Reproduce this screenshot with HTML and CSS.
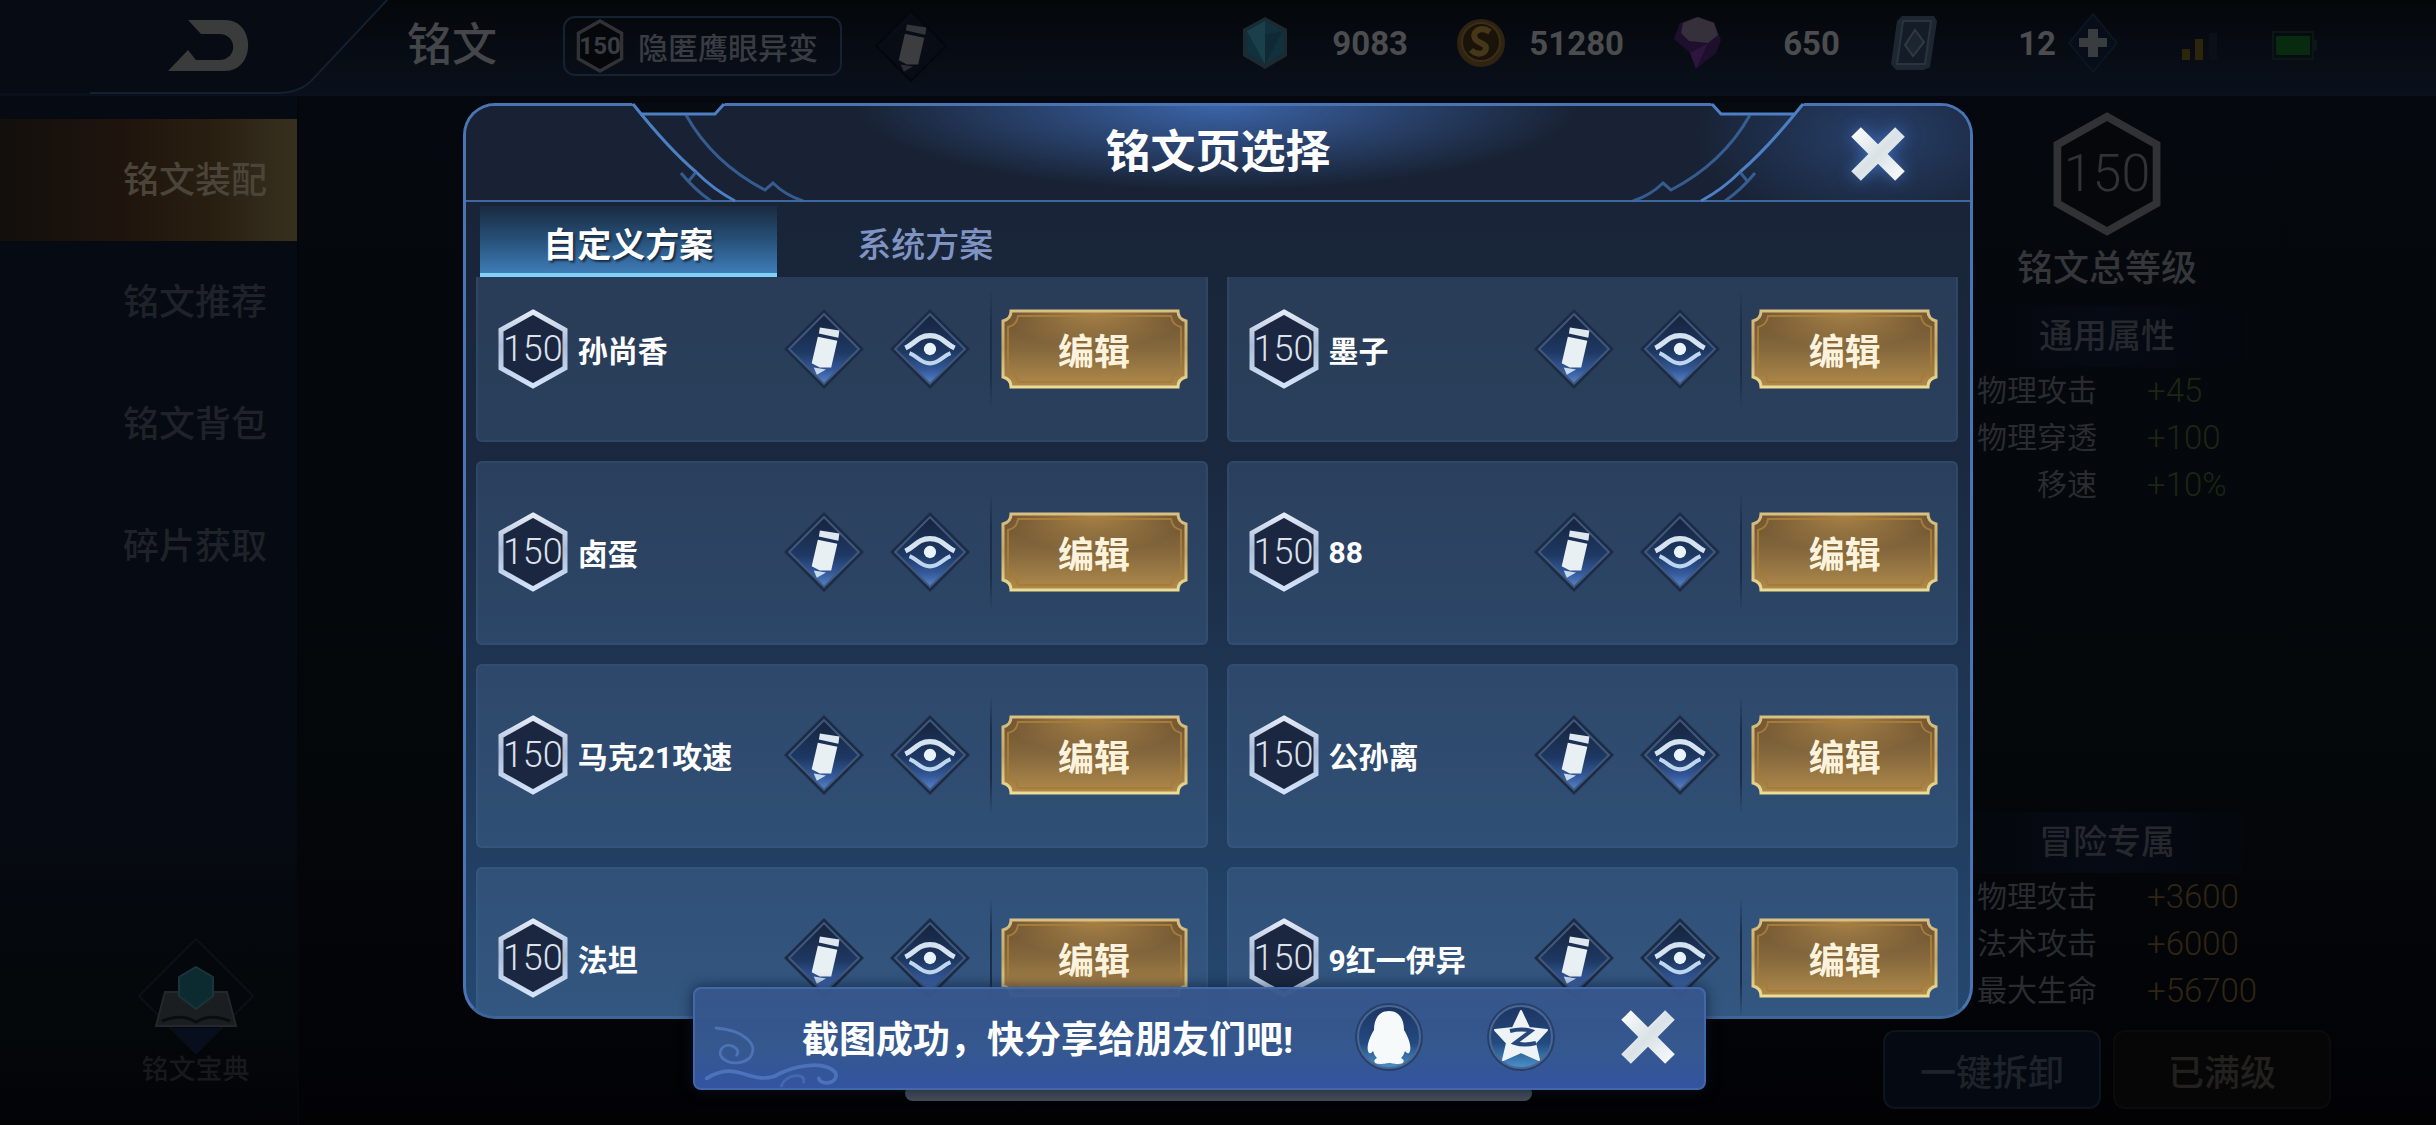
FILE: index.html
```html
<!DOCTYPE html>
<html lang="zh-CN">
<head>
    <meta charset="UTF-8">
    <title>铭文</title>
    <link rel="stylesheet" href="styles.css">
</head>
<body>
    <!-- shared icons -->
    <svg class="defs" width="0" height="0" aria-hidden="true">
        <defs>
            <linearGradient id="hexLine" x1="0" y1="0" x2="0" y2="1">
                <stop offset="0" stop-color="#e4eaf6"/>
                <stop offset="0.45" stop-color="#a9bcd8"/>
                <stop offset="1" stop-color="#d3e3fa"/>
            </linearGradient>
            <linearGradient id="diamondFill" x1="0" y1="0" x2="0" y2="1">
                <stop offset="0" stop-color="#16233c"/>
                <stop offset="0.55" stop-color="#1e3964"/>
                <stop offset="0.8" stop-color="#34599a"/>
                <stop offset="1" stop-color="#5685cc"/>
            </linearGradient>
            <linearGradient id="goldFill" x1="0" y1="0" x2="0" y2="1">
                <stop offset="0" stop-color="#6d5230"/>
                <stop offset="0.5" stop-color="#85683c"/>
                <stop offset="1" stop-color="#b08a4c"/>
            </linearGradient>
            <radialGradient id="goldGlow" cx="0.5" cy="0" r="0.5">
                <stop offset="0" stop-color="#c19752" stop-opacity="0.7"/>
                <stop offset="1" stop-color="#c19752" stop-opacity="0"/>
            </radialGradient>
            <linearGradient id="goldLine" x1="0" y1="0" x2="0" y2="1">
                <stop offset="0" stop-color="#d9c083"/>
                <stop offset="0.5" stop-color="#c5a865"/>
                <stop offset="1" stop-color="#eddc93"/>
            </linearGradient>
            <linearGradient id="roundFill" x1="0" y1="0" x2="0" y2="1">
                <stop offset="0" stop-color="#1c3563"/>
                <stop offset="0.6" stop-color="#234a80"/>
                <stop offset="1" stop-color="#4a92cc"/>
            </linearGradient>
            <linearGradient id="crossFill" x1="0" y1="0" x2="1" y2="1">
                <stop offset="0" stop-color="#ffffff"/>
                <stop offset="0.5" stop-color="#d9e2e6"/>
                <stop offset="1" stop-color="#fbfdff"/>
            </linearGradient>
        </defs>
        <symbol id="hex" viewBox="0 0 70 80">
            <path d="M35 3 67 21V59L35 77 3 59V21Z" fill="#1b2740" stroke="url(#hexLine)" stroke-width="5"/>
        </symbol>
        <symbol id="hexDim" viewBox="0 0 70 80">
            <path d="M35 3 67 21V59L35 77 3 59V21Z" fill="#05070b" stroke="#303236" stroke-width="5"/>
        </symbol>
        <symbol id="pencil" viewBox="0 0 78 78">
            <path d="M39 0 78 39 39 78 0 39Z" fill="#1c2c47"/>
            <path d="M39 5 73 39 39 73 5 39Z" fill="url(#diamondFill)" stroke="#40587c" stroke-width="2"/>
            <path d="M35 18 54 21 53 28 34 24Z" fill="#dfe8ef"/>
            <path d="M33 27 52 31 46 57 35 57 27 53Z" fill="#e9f0f3"/>
            <path d="M29 57 41 59 32 64Z" fill="#c7dbee"/>
        </symbol>
        <symbol id="pencilDim" viewBox="0 0 78 78">
            <path d="M39 5 73 39 39 73 5 39Z" fill="#070c15" stroke="#04070b" stroke-width="2"/>
            <path d="M35 18 54 21 53 28 34 24Z" fill="#323539"/>
            <path d="M33 27 52 31 46 57 35 57 27 53Z" fill="#3b3d40"/>
            <path d="M29 57 41 59 32 64Z" fill="#2a2e34"/>
        </symbol>
        <symbol id="eye" viewBox="0 0 78 78">
            <path d="M39 0 78 39 39 78 0 39Z" fill="#1c2c47"/>
            <path d="M39 5 73 39 39 73 5 39Z" fill="url(#diamondFill)" stroke="#40587c" stroke-width="2"/>
            <path d="M15 38C24 34 27 26 39 26S54 34 63 38" fill="none" stroke="#d5e3f0" stroke-width="5"/>
            <path d="M19 43C27 46 30 53 39 53S51 46 59 43" fill="none" stroke="#bfd6ef" stroke-width="4"/>
            <circle cx="39" cy="39" r="6" fill="#e9f3fb"/>
        </symbol>
        <symbol id="gold" viewBox="0 0 187 80" preserveAspectRatio="none">
            <path d="M10 2H177Q177 10 185 12V68Q177 70 177 78H10Q10 70 2 68V12Q10 10 10 2Z" fill="url(#goldFill)"/>
            <path d="M10 2H177Q177 10 185 12V68Q177 70 177 78H10Q10 70 2 68V12Q10 10 10 2Z" fill="url(#goldGlow)" stroke="url(#goldLine)" stroke-width="3"/>
            <path d="M17 7H170Q171 16 180 18V62Q171 64 170 73H17Q16 64 7 62V18Q16 16 17 7Z" fill="none" stroke="#a67c3b" stroke-width="2"/>
        </symbol>
        <symbol id="cross" viewBox="0 0 56 56">
            <path d="M12 3 28 19 44 3 53 12 37 28 53 44 44 53 28 37 12 53 3 44 19 28 3 12Z" fill="url(#crossFill)"/>
        </symbol>
        <symbol id="corner" viewBox="0 0 350 100">
            <path d="M169 0H262L253 11H177Z" fill="#060a11"/>
            <g fill="none" stroke="#3f6aa5">
                <path d="M170 1Q205 45 233 69Q250 86 272 98M177 11H252L261 1" stroke="#4d7fc4" stroke-width="3"/>
                <path d="M223 12Q250 60 302 87L310 80Q322 92 340 98" stroke-width="3" opacity="0.8"/>
                <path d="M218 70Q232 87 248 98M225 79 233 69" stroke-width="3" opacity="0.8"/>
            </g>
        </symbol>
    </svg>

    <header class="topbar">
        <button class="back" type="button" aria-label="返回">
            <svg viewBox="0 0 390 96" width="390" height="96">
                <path d="M0 0H389L312 82Q300 95 276 95H0Z" fill="#060b14"/>
                <path d="M389 0 312 82Q300 95 276 95H90" fill="none" stroke="#132030" stroke-width="2"/>
                <path d="M188 22H225C256 22 256 73 225 73H168L188 52 196 62H219C238 62 238 36 219 36H201Z" fill="#3a3c3c"/>
            </svg>
        </button>
        <h1>铭文</h1>
        <button class="page-pill" type="button">
            <span class="badge badge-small"><svg><use href="#hexDim"/></svg><b>150</b></span>
            隐匿鹰眼异变
        </button>
        <button class="icon-btn rename" type="button" aria-label="重命名">
            <svg><use href="#pencilDim"/></svg>
        </button>

        <div class="resources">
            <div class="resource">
                <svg viewBox="0 0 50 56"><path d="M25 2 47 14V41L25 54 3 41V14Z" fill="#1c2b31"/><path d="M25 6 43 16V38L25 49 7 38V16Z" fill="#12313e"/><path d="M25 6V49L7 16Z" fill="#1a404c"/><path d="M25 20 43 16 25 49Z" fill="#0f2a35"/></svg>
                <span>9083</span>
            </div>
            <div class="resource">
                <svg viewBox="0 0 50 56"><circle cx="25" cy="28" r="24" fill="#2f2311"/><circle cx="25" cy="27" r="19" fill="#1a130a" stroke="#3b2d16" stroke-width="2"/><path d="M34 17C24 10 14 18 20 25 24 29 33 29 29 36 25 41 18 38 15 35" fill="none" stroke="#463719" stroke-width="6"/></svg>
                <span>51280</span>
            </div>
            <div class="resource">
                <svg viewBox="0 0 50 56"><path d="M2 24 8 8 24 2 42 7 49 25 44 38 24 54 18 38Z" fill="#1e0f2c"/><path d="M11 8 26 2 42 8 46 20 36 28 17 26 9 18Z" fill="#35303a"/><path d="M18 38 36 28 24 54Z" fill="#2d1540"/></svg>
                <span>650</span>
            </div>
            <div class="resource">
                <svg viewBox="0 0 50 56"><path d="M14 1H46L49 6 42 52 36 55H8L3 49 9 6Z" fill="#1e2731"/><path d="M15 6H43L37 49H9Z" fill="#131c27" stroke="#2a343f" stroke-width="2"/><path d="M27 15 36 27 25 41 17 30Z" fill="#1c2631" stroke="#303a44" stroke-width="2"/></svg>
                <span>12</span>
            </div>
            <button class="add" type="button" aria-label="添加">
                <svg viewBox="0 0 50 60"><path d="M25 1 49 30 25 59 1 30Z" fill="#070e19" stroke="#0d1520" stroke-width="2"/><path d="M20 16H30V25H39V34H30V44H20V34H11V25H20Z" fill="#3a3d40"/></svg>
            </button>
            <svg class="signal" viewBox="0 0 36 30"><path d="M0 18H8V29H0Z" fill="#2c240b"/><path d="M13 8H21V29H13Z" fill="#2c240b"/><path d="M27 2H35V29H27Z" fill="#0b1018"/></svg>
            <svg class="battery" viewBox="0 0 46 30"><rect x="1" y="1" width="40" height="27" fill="none" stroke="#0a1712" stroke-width="2"/><rect x="4" y="5" width="34" height="19" fill="#082a0e"/><path d="M42 9H45V20H42Z" fill="#0a1712"/></svg>
        </div>
    </header>

    <main class="content">
        <nav class="sidebar">
            <a class="active" href="#">铭文装配</a>
            <a href="#">铭文推荐</a>
            <a href="#">铭文背包</a>
            <a href="#">碎片获取</a>
            <a class="codex" href="#">
                <svg viewBox="0 0 118 118"><path d="M59 2 116 59 59 116 2 59Z" fill="#04080d" stroke="#0b1118" stroke-width="2"/><path d="M34 91H84L59 116Z" fill="#070f1f"/><path d="M28 55H90L99 89H19Z" fill="#1b1e21" stroke="#24282c" stroke-width="2"/><path d="M25 84Q45 76 59 85 73 76 93 84" fill="none" stroke="#090d11" stroke-width="3"/><path d="M59 30 76 40V59L59 72 42 59V40Z" fill="#0c2b30" stroke="#1b343a" stroke-width="2"/></svg>
                铭文宝典
            </a>
        </nav>

        <aside class="stats">
            <div class="total">
                <span class="badge badge-large"><svg><use href="#hexDim"/></svg><b>150</b></span>
                <p>铭文总等级</p>
            </div>
            <section class="attributes">
                <h2>通用属性</h2>
                <dl>
                    <dt>物理攻击</dt><dd>+45</dd>
                    <dt>物理穿透</dt><dd>+100</dd>
                    <dt>移速</dt><dd>+10%</dd>
                </dl>
            </section>
            <section class="attributes adventure">
                <h2>冒险专属</h2>
                <dl>
                    <dt>物理攻击</dt><dd>+3600</dd>
                    <dt>法术攻击</dt><dd>+6000</dd>
                    <dt>最大生命</dt><dd>+56700</dd>
                </dl>
            </section>
            <div class="actions">
                <button type="button">一键拆卸</button>
                <button class="maxed" type="button">已满级</button>
            </div>
        </aside>
    </main>

    <div class="overlay">
        <section class="modal" role="dialog" aria-labelledby="modalTitle">
            <header class="modal-header">
                <svg class="corner"><use href="#corner"/></svg>
                <svg class="corner corner-right"><use href="#corner"/></svg>
                <h2 id="modalTitle">铭文页选择</h2>
                <button class="close" type="button" aria-label="关闭"><svg><use href="#cross"/></svg></button>
            </header>
            <div class="tabs">
                <button class="tab active" type="button">自定义方案</button>
                <button class="tab" type="button">系统方案</button>
            </div>
            <div class="list">
                <div class="cards">
                    <article class="card">
                        <span class="badge"><svg><use href="#hex"/></svg><b>150</b></span>
                        <h3>孙尚香</h3>
                        <button class="icon-btn" type="button" aria-label="重命名"><svg><use href="#pencil"/></svg></button>
                        <button class="icon-btn" type="button" aria-label="预览"><svg><use href="#eye"/></svg></button>
                        <div class="edit-wrap"><button class="edit" type="button"><svg><use href="#gold"/></svg><span>编辑</span></button></div>
                    </article>
                    <article class="card">
                        <span class="badge"><svg><use href="#hex"/></svg><b>150</b></span>
                        <h3>墨子</h3>
                        <button class="icon-btn" type="button" aria-label="重命名"><svg><use href="#pencil"/></svg></button>
                        <button class="icon-btn" type="button" aria-label="预览"><svg><use href="#eye"/></svg></button>
                        <div class="edit-wrap"><button class="edit" type="button"><svg><use href="#gold"/></svg><span>编辑</span></button></div>
                    </article>
                    <article class="card">
                        <span class="badge"><svg><use href="#hex"/></svg><b>150</b></span>
                        <h3>卤蛋</h3>
                        <button class="icon-btn" type="button" aria-label="重命名"><svg><use href="#pencil"/></svg></button>
                        <button class="icon-btn" type="button" aria-label="预览"><svg><use href="#eye"/></svg></button>
                        <div class="edit-wrap"><button class="edit" type="button"><svg><use href="#gold"/></svg><span>编辑</span></button></div>
                    </article>
                    <article class="card">
                        <span class="badge"><svg><use href="#hex"/></svg><b>150</b></span>
                        <h3>88</h3>
                        <button class="icon-btn" type="button" aria-label="重命名"><svg><use href="#pencil"/></svg></button>
                        <button class="icon-btn" type="button" aria-label="预览"><svg><use href="#eye"/></svg></button>
                        <div class="edit-wrap"><button class="edit" type="button"><svg><use href="#gold"/></svg><span>编辑</span></button></div>
                    </article>
                    <article class="card">
                        <span class="badge"><svg><use href="#hex"/></svg><b>150</b></span>
                        <h3>马克21攻速</h3>
                        <button class="icon-btn" type="button" aria-label="重命名"><svg><use href="#pencil"/></svg></button>
                        <button class="icon-btn" type="button" aria-label="预览"><svg><use href="#eye"/></svg></button>
                        <div class="edit-wrap"><button class="edit" type="button"><svg><use href="#gold"/></svg><span>编辑</span></button></div>
                    </article>
                    <article class="card">
                        <span class="badge"><svg><use href="#hex"/></svg><b>150</b></span>
                        <h3>公孙离</h3>
                        <button class="icon-btn" type="button" aria-label="重命名"><svg><use href="#pencil"/></svg></button>
                        <button class="icon-btn" type="button" aria-label="预览"><svg><use href="#eye"/></svg></button>
                        <div class="edit-wrap"><button class="edit" type="button"><svg><use href="#gold"/></svg><span>编辑</span></button></div>
                    </article>
                    <article class="card">
                        <span class="badge"><svg><use href="#hex"/></svg><b>150</b></span>
                        <h3>法坦</h3>
                        <button class="icon-btn" type="button" aria-label="重命名"><svg><use href="#pencil"/></svg></button>
                        <button class="icon-btn" type="button" aria-label="预览"><svg><use href="#eye"/></svg></button>
                        <div class="edit-wrap"><button class="edit" type="button"><svg><use href="#gold"/></svg><span>编辑</span></button></div>
                    </article>
                    <article class="card">
                        <span class="badge"><svg><use href="#hex"/></svg><b>150</b></span>
                        <h3>9红一伊异</h3>
                        <button class="icon-btn" type="button" aria-label="重命名"><svg><use href="#pencil"/></svg></button>
                        <button class="icon-btn" type="button" aria-label="预览"><svg><use href="#eye"/></svg></button>
                        <div class="edit-wrap"><button class="edit" type="button"><svg><use href="#gold"/></svg><span>编辑</span></button></div>
                    </article>
                </div>
            </div>
        </section>
    </div>

    <div class="home-bar"></div>
    <div class="toast" role="status">
        <svg class="cloud" viewBox="0 0 150 68"><g fill="none" stroke="#6390dc" stroke-linecap="round"><path d="M14 4C40 6 62 20 50 36 36 48 12 38 20 26 26 18 42 26 36 33" stroke-width="3" opacity="0.5"/><path d="M4 58C36 38 48 64 76 56 96 44 130 38 142 52 146 64 126 66 124 58" stroke-width="4" opacity="0.5"/><path d="M84 66C90 52 110 52 108 62" stroke-width="3" opacity="0.35"/></g></svg>
        <p>截图成功，快分享给朋友们吧!</p>
        <button type="button" aria-label="分享到QQ">
            <svg viewBox="0 0 70 70"><circle cx="35" cy="35" r="34" fill="#27406b"/><circle cx="35" cy="35" r="31" fill="url(#roundFill)" stroke="#4a688f" stroke-width="2"/><path d="M35 9C46 9 50 18 50 28 56 38 58 47 55 51 53 52 52 50 51 49 50 52 49 54 47 56 51 58 51 62 44 62 39 62 37 61 35 61S31 62 26 62C19 62 19 58 23 56 21 54 20 52 19 49 18 50 17 52 15 51 12 47 14 38 20 28 20 18 24 9 35 9Z" fill="#f6fafb"/></svg>
        </button>
        <button type="button" aria-label="分享到空间">
            <svg viewBox="0 0 70 70"><circle cx="35" cy="35" r="34" fill="#27406b"/><circle cx="35" cy="35" r="31" fill="url(#roundFill)" stroke="#4a688f" stroke-width="2"/><path d="M35 9 43 26 61 28 49 41 53 58 35 50 17 58 21 41 9 28 27 26Z" fill="#eef4f6" stroke="#eef4f6" stroke-width="2" stroke-linejoin="round"/><path d="M24 29Q36 26 45 29L29 41Q38 44 50 41" fill="none" stroke="#27477a" stroke-width="4"/></svg>
        </button>
        <button class="dismiss" type="button" aria-label="关闭"><svg><use href="#cross"/></svg></button>
    </div>
</body>
</html>
```
FILE: styles.css
```css
* {
    box-sizing: border-box;
}
body {
    margin: 0;
    height: 100vh;
    overflow: hidden;
    display: flex;
    flex-direction: column;
    background: linear-gradient(#05080e, #04070a 70%, #020205);
    color: #34363a;
    font-family: "Roboto", "Noto Sans CJK SC", sans-serif;
    font-size: 30px;
}
h1, h2, h3, p, dl, dd {
    margin: 0;
}
h1, h2, h3 {
    font-weight: 500;
}
button {
    margin: 0;
    padding: 0;
    border: none;
    background: none;
    color: inherit;
    font: inherit;
    cursor: pointer;
}
a {
    color: inherit;
    text-decoration: none;
}
svg {
    display: block;
}
.defs {
    position: absolute;
}

/* hexagon level badge */
.badge {
    display: grid;
    place-items: center;
    flex: none;
    width: 70px;
    height: 80px;
    color: #dbe2ee;
    font-size: 36px;
}
.badge svg, .badge b {
    grid-area: 1 / 1;
}
.badge svg {
    width: 100%;
    height: 100%;
}
.badge b {
    font-weight: 300;
}
.badge-small {
    width: 48px;
    height: 54px;
    color: inherit;
    font-size: 24px;
}
.badge-small b {
    font-weight: 700;
}
.badge-large {
    width: 110px;
    height: 124px;
    color: #303236;
    font-size: 52px;
}

/* top bar */
.topbar {
    display: flex;
    align-items: center;
    flex: none;
    height: 96px;
    padding-bottom: 4px;
    background: linear-gradient(#04070a, #0a101c);
}
.topbar h1 {
    margin-left: 17px;
    font-size: 45px;
    line-height: 60px;
    color: #44464a;
}
.page-pill {
    display: flex;
    align-items: center;
    gap: 14px;
    height: 60px;
    margin-left: 66px;
    padding: 0 22px 0 11px;
    border: 2px solid #152232;
    border-radius: 12px;
    color: #393c42;
    font-weight: 500;
}
.icon-btn {
    flex: none;
    width: 80px;
    height: 80px;
}
.icon-btn svg {
    width: 100%;
    height: 100%;
}
.rename {
    margin-left: 29px;
}
.resources {
    display: flex;
    align-items: center;
    gap: 48px;
    margin-left: auto;
    padding: 0 118px 6px 0;
    color: #4b4c4e;
    font-size: 33px;
    font-weight: 700;
}
.resource {
    display: flex;
    align-items: center;
    justify-content: space-between;
    width: 168px;
}
.resource svg {
    width: 50px;
    height: 56px;
}
.add {
    margin-left: -36px;
}
.add svg {
    width: 50px;
    height: 60px;
}
.signal {
    width: 36px;
    height: 30px;
    margin: 6px 0 0 16px;
}
.battery {
    width: 46px;
    height: 30px;
    margin: 6px 0 0 6px;
}

/* page behind the dialog */
.content {
    display: flex;
    justify-content: space-between;
    flex: 1;
    min-height: 0;
}
.sidebar {
    display: flex;
    flex-direction: column;
    width: 299px;
    padding: 23px 0 40px;
    border-right: 2px solid #03060a;
    background: linear-gradient(#060a12 70%, #04080a 90%, #030306);
    color: #1f2228;
    font-size: 36px;
    font-weight: 500;
}
.sidebar a {
    padding: 2px 30px 0 0;
    line-height: 120px;
    text-align: right;
}
.sidebar .active {
    background: linear-gradient(90deg, #130f0c, #1e140d 40%, #281e10 70%, #37301f);
    color: #4a4439;
}
.sidebar .codex {
    display: flex;
    flex-direction: column;
    align-items: center;
    margin: auto 0 0 94px;
    padding: 0;
    color: #17191d;
    font-size: 27px;
    line-height: 30px;
}
.codex svg {
    width: 118px;
    height: 118px;
}
.stats {
    display: flex;
    flex-direction: column;
    width: 553px;
    padding: 16px 0;
}
.total, .attributes {
    width: 272px;
    margin-left: 88px;
}
.total {
    display: flex;
    flex-direction: column;
    align-items: center;
    font-size: 36px;
    font-weight: 500;
    line-height: 50px;
}
.total p {
    margin: 8px 0 12px;
}
.attributes h2 {
    background: linear-gradient(90deg, #04070c, #060a14 50%, #04070c);
    color: #25282d;
    font-size: 34px;
    line-height: 61px;
    text-align: center;
}
.attributes dl {
    display: grid;
    grid-template-columns: 126px auto;
    column-gap: 50px;
    line-height: 47px;
    color: #292c31;
}
.attributes dt {
    text-align: right;
}
.attributes dd {
    color: #1b2712;
    font-size: 33px;
    font-weight: 300;
}
.adventure {
    margin-top: auto;
}
.adventure dd {
    color: #302613;
}
.actions {
    display: flex;
    gap: 12px;
    margin-top: 16px;
}
.actions button {
    width: 218px;
    height: 79px;
    border: 2px solid #0c141c;
    border-radius: 12px;
    background: #050a12;
    color: #1e2329;
    font-size: 36px;
    font-weight: 500;
}
.actions .maxed {
    border-color: #0b0b0c;
    background: #060606;
    color: #222120;
}

/* dialog */
.overlay {
    position: absolute;
    inset: 0;
    display: flex;
    justify-content: center;
    padding: 103px 0 106px;
}
.modal {
    display: flex;
    flex-direction: column;
    width: 62%;
    border: 3px solid #4a74b4;
    border-bottom-color: #3c6499;
    border-radius: 32px;
    background: linear-gradient(#182234, #1a2940 40%, #254870);
}
.modal-header {
    position: relative;
    display: grid;
    place-items: center;
    flex: none;
    height: 96px;
    border-bottom: 2px solid #3f689f;
    border-radius: 29px 29px 0 0;
    background:
        radial-gradient(ellipse 180px 100px at calc(100% - 95px) 30px, rgba(54, 92, 158, 0.5), transparent),
        radial-gradient(ellipse 360px 84px at 50% 0, #3b64a8, transparent),
        #182234;
}
.modal-header h2 {
    color: #fff;
    font-size: 45px;
    font-weight: 700;
    line-height: 60px;
}
.corner {
    position: absolute;
    top: -3px;
    left: -3px;
    width: 350px;
    height: 100px;
}
.corner-right {
    left: auto;
    right: -3px;
    transform: scaleX(-1);
}
.close {
    position: absolute;
    top: 18px;
    right: 62px;
}
.close svg {
    width: 60px;
    height: 60px;
    filter: drop-shadow(0 0 8px #3c6ab5);
}
.tabs {
    display: flex;
    flex: none;
    height: 75px;
    padding: 4px 14px 0;
}
.tab {
    width: 297px;
    padding-top: 2px;
    color: #8094c4;
    font-size: 34px;
    font-weight: 500;
}
.tab.active {
    padding-top: 6px;
    border-bottom: 4px solid #7fd2f5;
    background: linear-gradient(#1a2a40, #275078 50%, #3e7cb8);
    color: #fff;
    font-weight: 700;
    text-shadow: 2px 2px 2px #1b2c44;
}
.list {
    flex: 1;
    overflow: hidden;
    padding: 0 12px 0 10px;
    border-radius: 0 0 29px 29px;
}
/* list is scrolled a little, so the first row is cut at the top */
.cards {
    display: grid;
    grid-template-columns: 1fr 1fr;
    gap: 19px;
    margin-top: -19px;
}
.card {
    display: flex;
    align-items: center;
    height: 184px;
    padding: 0 18px 2px 20px;
    border: 2px solid rgba(90, 130, 180, 0.12);
    border-radius: 6px;
    background: rgba(90, 130, 180, 0.25);
}
.card h3 {
    flex: 1;
    margin-left: 10px;
    color: #fff;
    font-size: 30px;
    font-weight: 700;
}
.card .icon-btn {
    margin-right: 26px;
}
.edit-wrap {
    display: flex;
    align-items: center;
    height: 120px;
    margin-left: -6px;
    padding-left: 11px;
    background: linear-gradient(transparent, #1b2d48 30%, #1b2d48 70%, transparent) no-repeat left / 2px 100%;
}
.edit {
    display: grid;
    place-items: center;
    width: 187px;
    height: 80px;
    color: #fdf3dc;
    font-size: 36px;
    font-weight: 700;
}
.edit svg, .edit span {
    grid-area: 1 / 1;
}
.edit svg {
    width: 187px;
    height: 80px;
}

/* screenshot share bar */
.toast {
    position: absolute;
    left: 28.45%;
    bottom: 35px;
    display: flex;
    align-items: center;
    width: 1013px;
    height: 103px;
    padding: 0 26px 4px 10px;
    border: 2px solid #4168a8;
    border-radius: 8px;
    background: linear-gradient(rgba(54, 86, 140, 0.96), #35588f 60%, #3354a0);
    box-shadow: 0 0 14px rgba(10, 20, 40, 0.7);
    color: #fff;
}
.cloud {
    position: absolute;
    left: 8px;
    bottom: 0;
    width: 140px;
    height: 64px;
}
.toast p {
    flex: 1;
    margin-left: 97px;
    font-size: 37px;
    font-weight: 700;
}
.toast button {
    margin-right: 62px;
}
.toast button svg {
    width: 70px;
    height: 70px;
}
.toast .dismiss {
    margin: 0;
}
.toast .dismiss svg {
    width: 60px;
    height: 60px;
}
.home-bar {
    position: absolute;
    left: 50%;
    bottom: 24px;
    width: 627px;
    height: 15px;
    margin-left: -313px;
    border-radius: 8px;
    background: #444d59;
}
```
